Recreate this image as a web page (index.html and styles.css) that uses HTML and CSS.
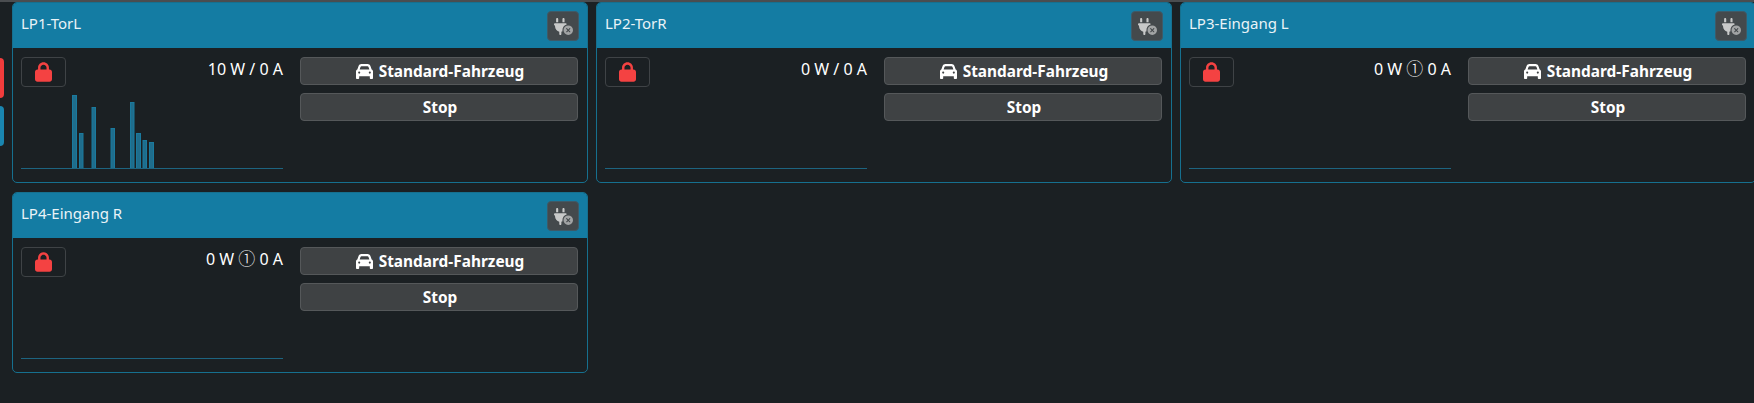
FILE: index.html
```html
<!DOCTYPE html>
<html lang="de">
<head>
  <meta charset="UTF-8" />
  <meta name="viewport" content="width=device-width, initial-scale=1" />
  <title>Ladepunkte</title>
  <link rel="stylesheet" href="styles.css">
</head>
<body>
  <div class="topline"></div>
  <div class="side-tab side-tab-red"></div>
  <div class="side-tab side-tab-blue"></div>

  <svg class="icon-defs" width="0" height="0">
    <symbol id="i-lock" viewBox="0 0 448 512">
      <path d="M144 144v48H304V144c0-44.2-35.8-80-80-80s-80 35.8-80 80zM80 192V144C80 64.5 144.5 0 224 0s144 64.5 144 144v48h16c35.3 0 64 28.7 64 64V448c0 35.3-28.7 64-64 64H64c-35.3 0-64-28.7-64-64V256c0-35.3 28.7-64 64-64H80z"/>
    </symbol>
    <symbol id="i-car" viewBox="0 0 512 512">
      <path d="M135.2 117.4L109.1 192H402.9l-26.1-74.6C372.3 104.6 360.2 96 346.6 96H165.4c-13.6 0-25.7 8.6-30.2 21.4zM39.6 196.8L74.8 96.3C88.3 57.8 124.6 32 165.4 32H346.6c40.8 0 77.1 25.8 90.6 64.3l35.2 100.5c23.2 9.6 39.6 32.5 39.6 59.2V400v48c0 17.7-14.3 32-32 32H448c-17.7 0-32-14.3-32-32V400H96v48c0 17.7-14.3 32-32 32H32c-17.7 0-32-14.3-32-32V400 256c0-26.7 16.4-49.6 39.6-59.2zM128 288a32 32 0 1 0 -64 0 32 32 0 1 0 64 0zm288 32a32 32 0 1 0 0-64 32 32 0 1 0 0 64z"/>
    </symbol>
    <symbol id="i-plug" viewBox="0 0 576 512">
      <path d="M96 0C78.3 0 64 14.3 64 32v96h64V32c0-17.7-14.3-32-32-32zM288 0c-17.7 0-32 14.3-32 32v96h64V32c0-17.7-14.3-32-32-32zM32 160c-17.7 0-32 14.3-32 32s14.3 32 32 32v32c0 77.4 55 142 128 156.8V480c0 17.7 14.3 32 32 32s32-14.3 32-32V412.8c12.3-2.5 24.1-6.4 35.1-11.5c-2.1-10.8-3.1-21.9-3.1-33.3c0-80.3 53.8-148 127.3-169.2c.5-2.2.7-4.5.7-6.8c0-17.7-14.3-32-32-32H32z"/>
      <path class="plug-mark" d="M432 512a144 144 0 1 0 0-288 144 144 0 1 0 0 288zm59.3-180.7L454.6 368l36.7 36.7c6.2 6.2 6.2 16.4 0 22.6s-16.4 6.2-22.6 0L432 390.6l-36.7 36.7c-6.2 6.2-16.4 6.2-22.6 0s-6.2-16.4 0-22.6L409.4 368l-36.7-36.7c-6.2-6.2-6.2-16.4 0-22.6s16.4-6.2 22.6 0L432 345.4l36.7-36.7c6.2-6.2 16.4-6.2 22.6 0s6.2 16.4 0 22.6z"/>
    </symbol>
  </svg>

  <main class="grid">
    <section class="card">
      <div class="card-head">
        <span class="card-title">LP1-TorL</span>
        <button class="plug-btn"><svg class="plug-icon"><use href="#i-plug"/></svg></button>
      </div>
      <div class="card-body">
        <div class="left-col">
          <div class="status-row">
            <button class="lock-btn"><svg class="lock-icon"><use href="#i-lock"/></svg></button>
            <span class="power">10 W / 0 A</span>
          </div>
          <svg class="chart" viewBox="0 0 262 79" preserveAspectRatio="none">
            <rect class="bar" x="51.5" y="5.5" width="4" height="73"/>
            <rect class="bar" x="58.5" y="43.5" width="3.5" height="35"/>
            <rect class="bar" x="71" y="17.5" width="3.5" height="61"/>
            <rect class="bar" x="90" y="38.5" width="3.5" height="40"/>
            <rect class="bar" x="109.5" y="12.5" width="3.5" height="66"/>
            <rect class="bar" x="115.5" y="43.5" width="4" height="35"/>
            <rect class="bar" x="122" y="50.5" width="3.5" height="28"/>
            <rect class="bar" x="128.5" y="52.5" width="4" height="26"/>
            <line class="axis" x1="0" y1="78.5" x2="262" y2="78.5"/>
          </svg>
        </div>
        <div class="right-col">
          <button class="action-btn"><svg class="car-icon"><use href="#i-car"/></svg>Standard-Fahrzeug</button>
          <button class="action-btn">Stop</button>
        </div>
      </div>
    </section>

    <section class="card">
      <div class="card-head">
        <span class="card-title">LP2-TorR</span>
        <button class="plug-btn"><svg class="plug-icon"><use href="#i-plug"/></svg></button>
      </div>
      <div class="card-body">
        <div class="left-col">
          <div class="status-row">
            <button class="lock-btn"><svg class="lock-icon"><use href="#i-lock"/></svg></button>
            <span class="power">0 W / 0 A</span>
          </div>
          <svg class="chart" viewBox="0 0 262 79" preserveAspectRatio="none">
            <line class="axis" x1="0" y1="78.5" x2="262" y2="78.5"/>
          </svg>
        </div>
        <div class="right-col">
          <button class="action-btn"><svg class="car-icon"><use href="#i-car"/></svg>Standard-Fahrzeug</button>
          <button class="action-btn">Stop</button>
        </div>
      </div>
    </section>

    <section class="card">
      <div class="card-head">
        <span class="card-title">LP3-Eingang L</span>
        <button class="plug-btn"><svg class="plug-icon"><use href="#i-plug"/></svg></button>
      </div>
      <div class="card-body">
        <div class="left-col">
          <div class="status-row">
            <button class="lock-btn"><svg class="lock-icon"><use href="#i-lock"/></svg></button>
            <span class="power">0 W <span class="phase">①</span> 0 A</span>
          </div>
          <svg class="chart" viewBox="0 0 262 79" preserveAspectRatio="none">
            <line class="axis" x1="0" y1="78.5" x2="262" y2="78.5"/>
          </svg>
        </div>
        <div class="right-col">
          <button class="action-btn"><svg class="car-icon"><use href="#i-car"/></svg>Standard-Fahrzeug</button>
          <button class="action-btn">Stop</button>
        </div>
      </div>
    </section>

    <section class="card">
      <div class="card-head">
        <span class="card-title">LP4-Eingang R</span>
        <button class="plug-btn"><svg class="plug-icon"><use href="#i-plug"/></svg></button>
      </div>
      <div class="card-body">
        <div class="left-col">
          <div class="status-row">
            <button class="lock-btn"><svg class="lock-icon"><use href="#i-lock"/></svg></button>
            <span class="power">0 W <span class="phase">①</span> 0 A</span>
          </div>
          <svg class="chart" viewBox="0 0 262 79" preserveAspectRatio="none">
            <line class="axis" x1="0" y1="78.5" x2="262" y2="78.5"/>
          </svg>
        </div>
        <div class="right-col">
          <button class="action-btn"><svg class="car-icon"><use href="#i-car"/></svg>Standard-Fahrzeug</button>
          <button class="action-btn">Stop</button>
        </div>
      </div>
    </section>
  </main>
</body>
</html>
```

FILE: styles.css
```css
html, body {
  height: 100%;
}

body {
  margin: 0;
  overflow: hidden;
  background: #1b2023;
  color: #fff;
  font-family: 'Noto Sans', 'Open Sans', sans-serif;
  font-size: 15px;
}

.topline {
  height: 2px;
  background: #4a4d50;
}

.side-tab {
  position: absolute;
  left: 0;
  width: 4px;
  height: 40px;
  border-radius: 0 4px 4px 0;
}

.side-tab-red {
  top: 58px;
  background: #f13c3c;
}

.side-tab-blue {
  top: 106px;
  background: #1a86b0;
}

.icon-defs {
  position: absolute;
}

.grid {
  display: grid;
  grid-template-columns: repeat(3, 576px);
  gap: 9px 8px;
  padding-left: 12px;
}

.card {
  height: 181px;
  box-sizing: border-box;
  border: 1px solid #16708f;
  border-radius: 5px;
  overflow: hidden;
}

.card-head {
  display: flex;
  justify-content: space-between;
  height: 46px;
  box-sizing: border-box;
  margin: -1px -1px 0;
  padding: 9px 9px 0 9px;
  background: #147ca3;
}

.card-title {
  font-size: 15px;
  line-height: 24px;
  color: #e9f3f7;
}

.plug-btn {
  width: 32px;
  height: 30px;
  padding: 0;
  display: flex;
  align-items: center;
  justify-content: center;
  background: #44494c;
  border: 1px solid #3e5a68;
  border-radius: 4px;
}

.plug-icon {
  width: 19px;
  height: 17px;
  fill: #c8c9c9;
}

.plug-mark {
  fill: #a2a4a5;
}

.card-body {
  display: grid;
  grid-template-columns: 262px 278px;
  column-gap: 17px;
  padding: 9px 8px 0;
}

.status-row {
  display: flex;
  justify-content: space-between;
  align-items: flex-start;
}

.lock-btn {
  width: 45px;
  height: 30px;
  padding: 0;
  display: flex;
  align-items: center;
  justify-content: center;
  background: transparent;
  border: 1px solid #3f4346;
  border-radius: 4px;
}

.lock-icon {
  width: 17px;
  height: 20px;
  fill: #f44242;
}

.power {
  font-size: 16px;
  line-height: 20px;
  margin-top: 2px;
  white-space: nowrap;
}

.phase {
  font-family: 'Noto Sans CJK JP', sans-serif;
  font-size: 17px;
  font-weight: 300;
  line-height: 16px;
}

.chart {
  display: block;
  width: 262px;
  height: 79px;
  margin-top: 3px;
}

.bar {
  fill: #1f6d8c;
  stroke: #1a7a9e;
  stroke-width: 1;
}

.axis {
  stroke: #1d6480;
  stroke-width: 1;
}

.right-col {
  display: flex;
  flex-direction: column;
  gap: 8px;
}

.action-btn {
  height: 28px;
  padding: 1px 0 0 2px;
  display: flex;
  align-items: center;
  justify-content: center;
  gap: 6px;
  background: #3f4244;
  border: 1px solid #55585a;
  border-radius: 4px;
  color: #fff;
  font-family: inherit;
  font-size: 15.4px;
  font-weight: 700;
}

.car-icon {
  width: 17px;
  height: 17px;
  fill: #fff;
}
```
